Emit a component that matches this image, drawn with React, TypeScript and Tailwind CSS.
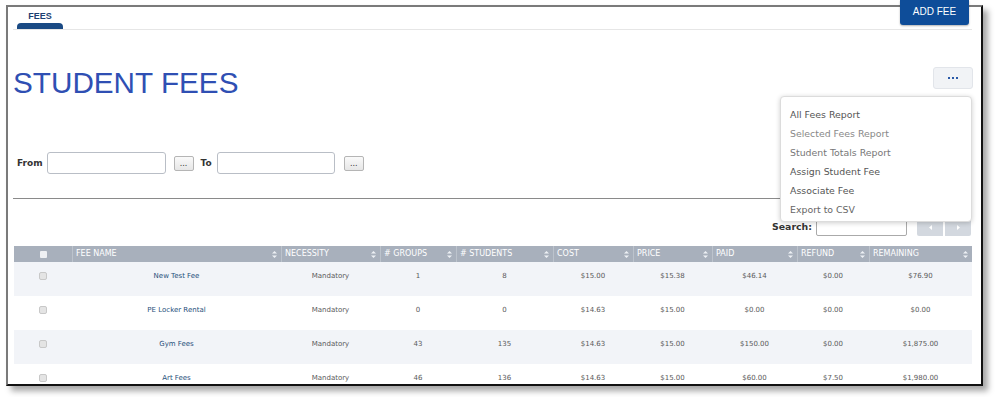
import React from "react";

const rows = [
  ["New Test Fee", "Mandatory", "1", "8", "$15.00", "$15.38", "$46.14", "$0.00", "$76.90"],
  ["PE Locker Rental", "Mandatory", "0", "0", "$14.63", "$15.00", "$0.00", "$0.00", "$0.00"],
  ["Gym Fees", "Mandatory", "43", "135", "$14.63", "$15.00", "$150.00", "$0.00", "$1,875.00"],
  ["Art Fees", "Mandatory", "46", "136", "$14.63", "$15.00", "$60.00", "$7.50", "$1,980.00"],
];

const headers = ["Fee Name", "Necessity", "# Groups", "# Students", "Cost", "Price", "Paid", "Refund", "Remaining"];

const menuItems = [
  { label: "All Fees Report", color: "text-[#555]" },
  { label: "Selected Fees Report", color: "text-[#888]" },
  { label: "Student Totals Report", color: "text-[#777]" },
  { label: "Assign Student Fee", color: "text-[#555]" },
  { label: "Associate Fee", color: "text-[#555]" },
  { label: "Export to CSV", color: "text-[#666]" },
];

const cols = "grid grid-cols-[58px_209px_99px_76px_97px_80px_79px_85px_72px_103px]";

function SortIcon() {
  return (
    <svg width="5" height="7" viewBox="0 0 5 7" className="shrink-0">
      <path d="M2.5 0 L5 2.6 H0 Z" fill="#eef1f5" />
      <path d="M2.5 7 L5 4.4 H0 Z" fill="#eef1f5" />
    </svg>
  );
}

function DotsButton() {
  return (
    <button className="w-[20px] h-[15px] border border-[#b5b5b5] rounded-[2px] bg-gradient-to-b from-[#fafafa] to-[#e6e6e6] flex items-end justify-center pb-[2px]">
      <span className="text-[8px] leading-[8px] text-[#333] font-['DejaVu_Sans',sans-serif]">...</span>
    </button>
  );
}

export default function App() {
  return (
    <div className="w-[995px] h-[397px] bg-white relative overflow-hidden">
      {/* FRAME */}
      <div className="ml-[6px] mt-[5px] w-[977px] h-[381px] border-2 border-t-[#7a7a7a] border-l-[#7a7a7a] border-r-[#111] border-b-[#111] shadow-[5px_5px_6px_rgba(0,0,0,0.35)] overflow-hidden bg-white">
        {/* TABS */}
        <div className="h-[22px] flex items-end pl-[9px]">
          <div className="w-[46px] flex flex-col items-center">
            <span className="text-[9px] leading-[10px] font-bold text-[#1c3f73] font-['Liberation_Sans',sans-serif] mb-[2px]">
              FEES
            </span>
            <div className="w-full h-[6px] bg-[#1a4a84] rounded-t-[4px]" />
          </div>
        </div>
        <div className="h-px bg-[#e6e6e6] ml-[5px] mr-[9px]" />

        {/* TITLE */}
        <div className="mt-[38px] flex justify-between items-start pl-[5px] pr-[8px]">
          <h1 className="text-[29.7px] leading-[29px] text-[#2f4fb3] font-['Liberation_Sans',sans-serif]">
            STUDENT FEES
          </h1>
          <button className="-mt-px w-[40px] h-[22px] bg-[#f1f3f6] border border-[#e2e5ea] rounded-[3px] flex items-center justify-center gap-[2px]">
            <span className="w-[2px] h-[2px] bg-[#2a5aa8]" />
            <span className="w-[2px] h-[2px] bg-[#2a5aa8]" />
            <span className="w-[2px] h-[2px] bg-[#2a5aa8]" />
          </button>
        </div>

        {/* DATE RANGE */}
        <div className="mt-[55px] flex items-center pl-[9px] h-[22px] font-['DejaVu_Sans',sans-serif]">
          <span className="text-[9px] font-bold text-[#333] pt-[2px]">From</span>
          <input className="ml-[4px] w-[119px] h-[22px] border border-[#b9bec6] rounded-[3px] bg-white" />
          <div className="ml-[8px]">
            <DotsButton />
          </div>
          <span className="ml-[7px] text-[9px] font-bold text-[#333] pt-[2px]">To</span>
          <input className="ml-[5px] w-[118px] h-[22px] border border-[#b9bec6] rounded-[3px] bg-white" />
          <div className="ml-[9px]">
            <DotsButton />
          </div>
        </div>

        <div className="mt-[24px] h-px bg-[#8a8a8a] ml-[5px] mr-[9px]" />

        {/* SEARCH */}
        <div className="mt-[20px] flex items-center justify-end pr-[10px] h-[17px] font-['DejaVu_Sans',sans-serif]">
          <span className="text-[9.4px] font-bold text-[#333]">Search:</span>
          <input className="ml-[4px] w-[91px] h-[16px] border border-[#aaa] rounded-[2px] bg-white" />
          <div className="ml-[10px] flex gap-[2px]">
            <div className="w-[26px] h-[17px] bg-[#d3d8df] rounded-l-[2px] flex items-center justify-center">
              <svg width="3" height="5" viewBox="0 0 3 5">
                <path d="M3 0 V5 L0 2.5 Z" fill="#fff" />
              </svg>
            </div>
            <div className="w-[26px] h-[17px] bg-[#d3d8df] rounded-r-[2px] flex items-center justify-center">
              <svg width="3" height="5" viewBox="0 0 3 5">
                <path d="M0 0 V5 L3 2.5 Z" fill="#fff" />
              </svg>
            </div>
          </div>
        </div>

        {/* TABLE */}
        <div className="mt-[10px] ml-[6px] w-[958px] font-['DejaVu_Sans',sans-serif]">
          <div className={`${cols} h-[16px] bg-[#a8b0bc]`}>
            <div className="flex items-center justify-center">
              <span className="w-[7px] h-[7px] bg-[#eef0f3] rounded-[1px]" />
            </div>
            {headers.map((h) => (
              <div
                key={h}
                className="flex items-center justify-between pl-[3px] pr-[4px] border-l border-[#bcc3cc] text-[8px] uppercase text-white"
              >
                <span>{h}</span>
                <SortIcon />
              </div>
            ))}
          </div>
          {rows.map((r, i) => (
            <div key={r[0]} className={`${cols} h-[34px] ${i % 2 === 0 ? "bg-[#f2f4f8]" : "bg-white"}`}>
              <div className="flex items-center justify-center pb-[6px]">
                <span className="w-[8px] h-[8px] bg-[#e4e4e4] border border-[#c8c8c8] rounded-[2px]" />
              </div>
              {r.map((c, j) => (
                <div
                  key={j}
                  className={`flex items-center justify-center pb-[6px] text-[7px] ${j === 0 ? "text-[#1f4f7b]" : "text-[#5a5a5a]"}`}
                >
                  {c}
                </div>
              ))}
            </div>
          ))}
        </div>
      </div>

      {/* ADD FEE BUTTON */}
      <button className="absolute left-[900px] top-0 w-[69px] h-[25px] bg-[#0e4d99] rounded-b-[3px] shadow-[0_1px_2px_rgba(0,0,0,0.3)] flex items-center justify-center pb-[2px] text-[10px] text-white font-['Liberation_Sans',sans-serif]">
        ADD FEE
      </button>

      {/* ACTIONS MENU */}
      <div className="absolute left-[780px] top-[96px] w-[192px] h-[126px] bg-white border border-[#dcdcdc] rounded-[4px] shadow-[0_1px_5px_rgba(0,0,0,0.2)] pt-[8px] font-['DejaVu_Sans',sans-serif]">
        {menuItems.map((m) => (
          <div key={m.label} className={`h-[19px] leading-[19px] pl-[9px] text-[9.4px] ${m.color}`}>
            {m.label}
          </div>
        ))}
      </div>
    </div>
  );
}
